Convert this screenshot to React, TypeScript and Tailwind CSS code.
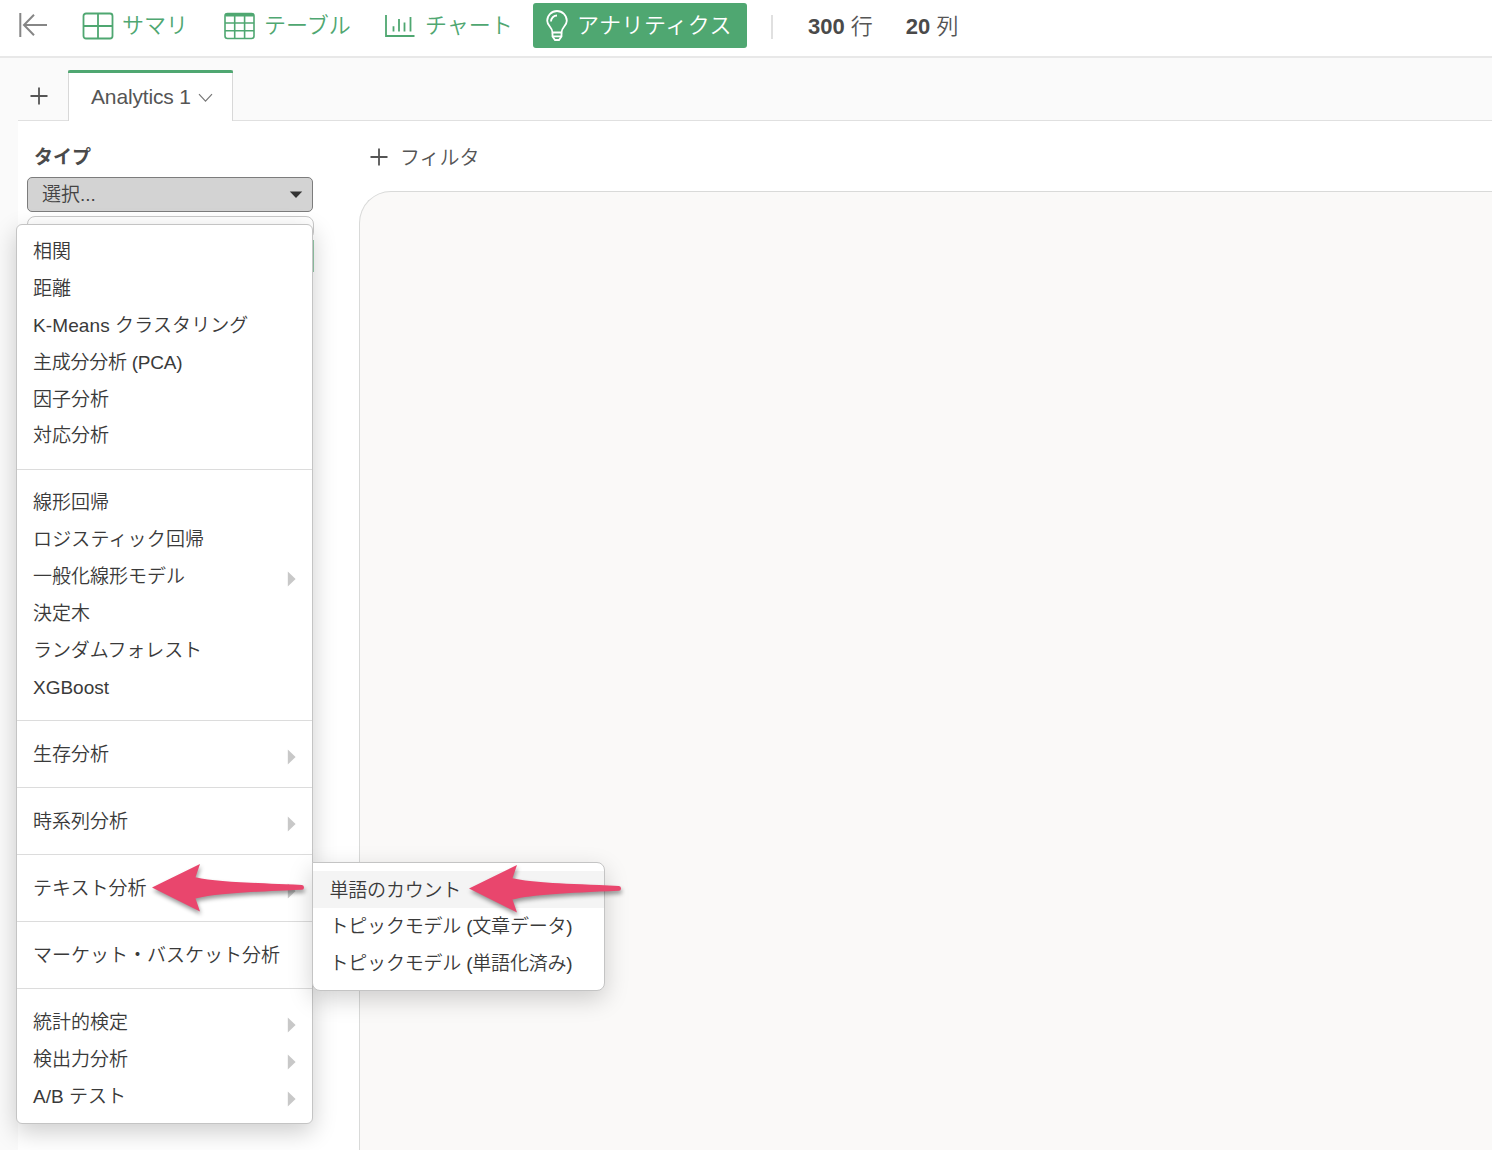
import React, { useState } from 'react';

type MenuItem = { label: string; submenu?: boolean; tracking?: string };

const GROUPS: MenuItem[][] = [
  [
    { label: '相関' },
    { label: '距離' },
    { label: 'K-Means クラスタリング', tracking: 'tracking-[0.1px]' },
    { label: '主成分分析 (PCA)', tracking: 'tracking-[-0.25px]' },
    { label: '因子分析' },
    { label: '対応分析' },
  ],
  [
    { label: '線形回帰' },
    { label: 'ロジスティック回帰', tracking: 'tracking-[0.15px]' },
    { label: '一般化線形モデル', submenu: true },
    { label: '決定木' },
    { label: 'ランダムフォレスト', tracking: 'tracking-[-0.1px]' },
    { label: 'XGBoost' },
  ],
  [{ label: '生存分析', submenu: true }],
  [{ label: '時系列分析', submenu: true }],
  [{ label: 'テキスト分析', submenu: true }],
  [{ label: 'マーケット・バスケット分析' }],
  [
    { label: '統計的検定', submenu: true },
    { label: '検出力分析', submenu: true },
    { label: 'A/B テスト', submenu: true },
  ],
];

const TEXT_ITEMS = ['単語のカウント', 'トピックモデル (文章データ)', 'トピックモデル (単語化済み)'];

function App() {
  const [active, setActive] = useState(TEXT_ITEMS[0]);

  return (
    <div className="flex flex-col h-screen overflow-hidden bg-white text-[#555] font-[350] font-['Liberation_Sans','Noto_Sans_CJK_JP',sans-serif]">

      {/* HEADER */}
      <header className="h-[58px] shrink-0 flex items-start border-b-2 border-[#e8e8e8] text-[22px] leading-[44px] text-[#4fa771] whitespace-nowrap">
        <button className="ml-[18px] mt-[11px] w-[30px]">
          <CollapseIcon />
        </button>
        <NavItem className="ml-[34px] w-[142px]" gap="ml-[8px]" icon={<SummaryIcon />} label="サマリ" />
        <NavItem className="w-[160px]" gap="ml-[9px]" icon={<TableIcon />} label="テーブル" />
        <NavItem className="w-[149px]" gap="ml-[10px]" icon={<ChartIcon />} label="チャート" />
        <div className="mt-[3px] h-[45px] w-[214px] rounded-[3px] bg-[#4fa771] text-white flex pl-[13px]">
          <BulbIcon />
          <span className="ml-[9px] pt-px tracking-[0.5px]">アナリティクス</span>
        </div>
        <div className="ml-[24px] mt-[15px] h-[24px] w-[2px] bg-[#e0e0e0]" />
        <div className="ml-[35px] mt-[5px] text-[#555]"><span className="font-bold text-[#4a4a4a]">300</span> 行</div>
        <div className="ml-[33px] mt-[5px] text-[#555]"><span className="font-bold text-[#4a4a4a]">20</span> 列</div>
      </header>

      <div className="flex-1 min-h-0 flex flex-col bg-[#fafafa] pl-[18px]">
        {/* TABS */}
        <div className="h-[63px] shrink-0 flex items-end border-b border-[#e0e0e0]">
          <button className="w-[50px] h-[50px] flex items-center pl-[12px] pt-px">
            <PlusIcon />
          </button>
          <div className="-mb-px h-[51px] w-[165px] bg-white border-x border-[#d8d8d8] flex flex-col">
            <div className="-mx-px h-[3px] rounded-t-[2px] bg-[#4fa771]" />
            <div className="flex items-center h-[48px] pl-[22px] text-[21px] tracking-[-0.15px] whitespace-nowrap">
              Analytics 1
              <svg className="ml-[7px] mt-[2px]" width="15" height="10" fill="none" stroke="#777" strokeWidth="1.2">
                <path d="M1 1.2 7.5 8.2 14 1.2" />
              </svg>
            </div>
          </div>
        </div>

        {/* CONTENT */}
        <div className="flex-1 min-h-0 flex bg-white">
          <aside className="relative z-10 w-[341px] shrink-0 pl-[9px] pr-[46px]">
            <div className="pl-[7px] pt-[23px] h-[56px] text-[19px] leading-[28px] font-bold text-[#4a4a4a]">タイプ</div>
            <button className="w-[286px] h-[35px] flex items-center justify-between rounded-[5px] border border-[#7c7c7c] bg-[#d3d3d3] pl-[14px] pr-[9px] text-[19px] text-[#444]">
              <span className="mt-[2px]">選択...</span>
              <svg width="14" height="8" fill="#333"><path d="M.8.5h12.4L7 7z" /></svg>
            </button>
            <div className="mt-[4px] w-[287px] h-[24px] rounded-[8px] border border-[#c8c8c8] bg-white" />
            <div className="w-[287px] h-[32px] bg-[#4fa771]/60" />

            <TypeMenu />
            <TextSubmenu active={active} onSelect={setActive} />
            <PinkArrow className="absolute left-[132px] top-[738px]" />
            <PinkArrow className="absolute left-[449px] top-[739px]" />
          </aside>

          <main className="flex-1 min-w-0 flex flex-col">
            <button className="h-[70px] flex pl-[11px] pt-[22px] text-[20px] leading-[28px] whitespace-nowrap">
              <span className="mt-[5px]"><PlusIcon /></span>
              <span className="ml-[12px] mt-px">フィルタ</span>
            </button>
            <div className="flex-1 rounded-tl-[32px] border-l border-t border-[#d9dad9] bg-[#faf9f8]" />
          </main>
        </div>
      </div>
    </div>
  );
}

const NavItem = ({ className, gap, icon, label }: any) => (
  <div className={`flex mt-[3px] ${className}`}>
    {icon}
    <span className={`pt-px ${gap}`}>{label}</span>
  </div>
);

const TypeMenu = () => (
  <div className="absolute left-[-2px] top-[103px] w-[297px] h-[900px] pt-[9px] rounded-[6px] border border-[#c4c4c4] bg-white shadow-[0_8px_24px_rgba(0,0,0,0.2)] text-[19px] text-[#3a3a3a] whitespace-nowrap">
    {GROUPS.map((group, i) => (
      <div key={i} className={i > 0 ? 'mt-[13.6px] border-t border-[#dcdcdc] pt-[15.65px]' : ''}>
        {group.map((item) => (
          <div key={item.label} className={`h-[36.85px] flex items-center justify-between pl-[16px] pr-[16px] ${item.tracking ?? ''}`}>
            {item.label}
            {item.submenu && (
              <svg className="mt-[3px]" width="9" height="16" fill="#c8c8c8"><path d="M.8.5 8.6 8 .8 15.5z" /></svg>
            )}
          </div>
        ))}
      </div>
    ))}
  </div>
);

const TextSubmenu = ({ active, onSelect }: { active: string; onSelect: (label: string) => void }) => (
  <div className="absolute left-[294px] top-[741px] w-[293px] h-[129px] pt-[8px] rounded-[8px] rounded-tl-none border border-[#c4c4c4] bg-white shadow-[0_8px_24px_rgba(0,0,0,0.18)] text-[19px] text-[#3a3a3a] whitespace-nowrap">
    {TEXT_ITEMS.map((label) => (
      <div
        key={label}
        onClick={() => onSelect(label)}
        className={`h-[36.8px] flex items-center pl-[16.5px] pt-[3px] tracking-[-0.2px] ${active === label ? 'bg-[#f4f4f4]' : ''}`}
      >
        {label}
      </div>
    ))}
  </div>
);

const PinkArrow = ({ className }: { className: string }) => (
  <svg className={`${className} overflow-visible drop-shadow-[1px_3px_2px_rgba(0,0,0,0.4)]`} width="156" height="56" fill="#e9466d">
    <path d="M2 28.5 50 5 45.5 18.3C66 23 97 23.5 152 26Q154 26.1 154 28.4 154 30.600 152 30.700C97 33 66 34.500 45.500 39.500L50 52.500z" />
  </svg>
);

const PlusIcon = () => (
  <svg width="18" height="18" stroke="#555" strokeWidth="1.800"><path d="M9 .5v17M.5 9h17" /></svg>
);

const CollapseIcon = () => (
  <svg width="30" height="28" fill="none" stroke="#868686" strokeWidth="2">
    <path d="M2.300 2v24M29 14H6M16 3.800 6 14l10 10.200" />
  </svg>
);

const SummaryIcon = () => (
  <svg className="mt-[9px]" width="32" height="28" fill="none" stroke="#4fa771" strokeWidth="1.800">
    <rect x="1.500" y="1.500" width="29" height="25" rx="2.500" />
    <path d="M16 1.500v25M1.500 14h29" />
  </svg>
);

const TableIcon = () => (
  <svg className="mt-[9px]" width="31" height="28" fill="none" stroke="#4fa771" strokeWidth="1.600">
    <rect x="1" y="1.500" width="29" height="25" rx="2.500" />
    <path d="M10.700 3v23M20.600 3v23M1 11h29M1 18.700h29" />
    <path d="M1.500 3h28" strokeWidth="3" />
  </svg>
);

const ChartIcon = () => (
  <svg className="mt-[8px]" width="31" height="26" fill="none" stroke="#4fa771" strokeWidth="1.800">
    <path d="M2 4v21h28.500M9.500 15.200v5.300M15 8v12.500M20.500 11.500v9M26.500 6v14.500" />
  </svg>
);

const BulbIcon = () => (
  <svg className="mt-[7px]" width="22" height="32" fill="none" stroke="white" strokeWidth="1.800">
    <path d="M6.500 22.500C6.500 17 1.200 16 1.200 10.800a9.800 9.800 0 0 1 19.600 0C20.800 16 15.500 17 15.500 22.500z" />
    <path d="M5 11.500a6 6 0 0 1 6-6M6.500 22.500v4l2.500 3.500h4l2.500-3.500v-4M6.500 26.300h9" />
  </svg>
);

export default App;
